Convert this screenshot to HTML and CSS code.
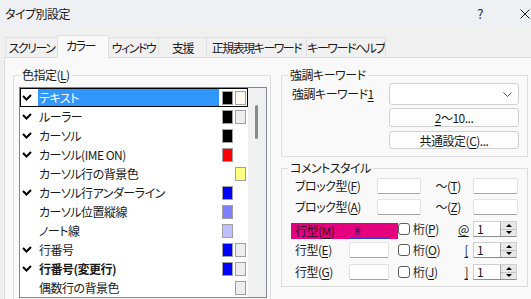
FILE: index.html
```html
<!DOCTYPE html>
<html lang="ja">
<head>
  <meta charset="UTF-8">
  <title>タイプ別設定</title>
  <link rel="stylesheet" href="styles.css">
</head>
<body>
  <div class="titlebar">
    <span class="title">タイプ別設定</span>
    <span class="help">?</span>
    <svg class="close" width="10" height="10" viewBox="0 0 10 10">
      <path d="M0.5 0.5L9.5 9.5M9.5 0.5L0.5 9.5" stroke="#1a1a1a" stroke-width="1" fill="none"/>
    </svg>
  </div>

  <div class="tabs">
    <div class="tab">スクリーン</div>
    <div class="tab active">カラー</div>
    <div class="tab">ウィンドウ</div>
    <div class="tab">支援</div>
    <div class="tab">正規表現キーワード</div>
    <div class="tab">キーワードヘルプ</div>
  </div>

  <div class="panel">
    <fieldset class="group colors">
      <legend>色指定(<u>L</u>)</legend>
      <div class="listbox">
        <div class="items">
          <div class="item sel">
            <span class="check"><svg width="10" height="8" viewBox="0 0 10 8"><path d="M1 2L4.5 5.5L9 1" /></svg></span>
            <span class="name">テキスト</span>
            <span class="sw black"></span><span class="sw cream"></span>
          </div>
          <div class="item">
            <span class="check"><svg width="10" height="8" viewBox="0 0 10 8"><path d="M1 2L4.5 5.5L9 1" /></svg></span>
            <span class="name">ルーラー</span>
            <span class="sw black"></span><span class="sw grey"></span>
          </div>
          <div class="item">
            <span class="check"><svg width="10" height="8" viewBox="0 0 10 8"><path d="M1 2L4.5 5.5L9 1" /></svg></span>
            <span class="name">カーソル</span>
            <span class="sw black"></span><span class="sw none"></span>
          </div>
          <div class="item">
            <span class="check"><svg width="10" height="8" viewBox="0 0 10 8"><path d="M1 2L4.5 5.5L9 1" /></svg></span>
            <span class="name">カーソル(IME ON)</span>
            <span class="sw red"></span><span class="sw none"></span>
          </div>
          <div class="item">
            <span class="check"></span>
            <span class="name">カーソル行の背景色</span>
            <span class="sw none"></span><span class="sw yellow"></span>
          </div>
          <div class="item">
            <span class="check"><svg width="10" height="8" viewBox="0 0 10 8"><path d="M1 2L4.5 5.5L9 1" /></svg></span>
            <span class="name">カーソル行アンダーライン</span>
            <span class="sw blue"></span><span class="sw none"></span>
          </div>
          <div class="item">
            <span class="check"></span>
            <span class="name">カーソル位置縦線</span>
            <span class="sw mid-blue"></span><span class="sw none"></span>
          </div>
          <div class="item">
            <span class="check"></span>
            <span class="name">ノート線</span>
            <span class="sw pale-blue"></span><span class="sw none"></span>
          </div>
          <div class="item">
            <span class="check"><svg width="10" height="8" viewBox="0 0 10 8"><path d="M1 2L4.5 5.5L9 1" /></svg></span>
            <span class="name">行番号</span>
            <span class="sw blue"></span><span class="sw grey"></span>
          </div>
          <div class="item">
            <span class="check"><svg width="10" height="8" viewBox="0 0 10 8"><path d="M1 2L4.5 5.5L9 1" /></svg></span>
            <span class="name bold">行番号(変更行)</span>
            <span class="sw blue"></span><span class="sw grey"></span>
          </div>
          <div class="item">
            <span class="check"></span>
            <span class="name">偶数行の背景色</span>
            <span class="sw none"></span><span class="sw grey"></span>
          </div>
        </div>
        <div class="scrollbar"><div class="thumb"></div></div>
      </div>
    </fieldset>

    <div class="right">
      <fieldset class="group keywords">
        <legend>強調キーワード</legend>
        <div class="kw-grid">
          <label>強調キーワード<u>1</u></label>
          <div class="combo">
            <svg width="9" height="5" viewBox="0 0 9 5"><path d="M0.5 0.5L4.5 4.5L8.5 0.5" fill="none" stroke="#555" stroke-width="1"/></svg>
          </div>
          <button class="btn btn-first"><u>2</u>〜10...</button>
          <button class="btn btn-second">共通設定(<u>C</u>)...</button>
        </div>
      </fieldset>

      <fieldset class="group comments">
        <legend>コメントスタイル</legend>
        <div class="line">
          <span class="lbl-block">ブロック型(<u>F</u>)</span>
          <span class="field"></span>
          <span class="lbl-to">〜(<u>T</u>)</span>
          <span class="field"></span>
        </div>
        <div class="line gap-5">
          <span class="lbl-block">ブロック型(<u>A</u>)</span>
          <span class="field"></span>
          <span class="lbl-to">〜(<u>Z</u>)</span>
          <span class="field"></span>
        </div>
        <div class="line gap-6">
          <span class="key hl">
            <span class="lbl-line">行型(<u>M</u>)</span>
            <span class="field small hash">#</span>
          </span>
          <span class="cb"></span>
          <span class="lbl-col">桁(<u>P</u>)</span>
          <span class="mark"><u>@</u></span>
          <span class="spin"><span class="val">1</span><span class="arrows"><span class="up"></span><span class="down"></span></span></span>
        </div>
        <div class="line gap-5">
          <span class="key">
            <span class="lbl-line">行型(<u>E</u>)</span>
            <span class="field small"></span>
          </span>
          <span class="cb"></span>
          <span class="lbl-col">桁(<u>O</u>)</span>
          <span class="mark"><u>[</u></span>
          <span class="spin"><span class="val">1</span><span class="arrows"><span class="up"></span><span class="down"></span></span></span>
        </div>
        <div class="line gap-6">
          <span class="key">
            <span class="lbl-line">行型(<u>G</u>)</span>
            <span class="field small"></span>
          </span>
          <span class="cb"></span>
          <span class="lbl-col">桁(<u>J</u>)</span>
          <span class="mark"><u>]</u></span>
          <span class="spin"><span class="val">1</span><span class="arrows"><span class="up"></span><span class="down"></span></span></span>
        </div>
      </fieldset>
    </div>
  </div>
</body>
</html>
```

FILE: styles.css
```css
:root {
  --text-color: #1a1a1a;
  --window-bg: #f0f0f0;
  --panel-bg: #f9f9f9;
  --title-bg: #eff0f4;
  --line-color: #dcdcdc;
  --select-blue: #3297fd;
  --accent: #e5007e;
}

* {
  margin: 0;
  padding: 0;
  box-sizing: border-box;
}

body {
  width: 531px;
  height: 299px;
  overflow: hidden;
  background: var(--window-bg);
  color: var(--text-color);
  font-family: "Noto Sans CJK JP", "Noto Sans", sans-serif;
  font-size: 12px;
  line-height: 16px;
  letter-spacing: -0.5px;
  font-feature-settings: "palt";
}

u {
  text-underline-offset: 2px;
}

/* title bar */
.titlebar {
  height: 27px;
  display: flex;
  align-items: center;
  padding: 0 1px 0 5px;
  background: var(--title-bg);
}

.title {
  flex: 1;
}

.help {
  margin-right: 37px;
  font-size: 13px;
}

/* tabs */
.tabs {
  height: 30px;
  display: flex;
  align-items: flex-end;
  padding-left: 5px;
}

.tab {
  height: 20px;
  line-height: 19px;
  text-align: center;
  letter-spacing: -1.5px;
  overflow: hidden;
  border: 1px solid #e0e0e0;
  border-right: none;
  border-bottom: none;
  white-space: nowrap;
}

.tab:nth-child(1) { width: 52px; }
.tab:nth-child(2) { width: 51px; }
.tab:nth-child(3) { width: 50px; }
.tab:nth-child(4) { width: 48px; }
.tab:nth-child(5) { width: 100px; }
.tab:nth-child(6) { width: 80px; border-right: 1px solid #e0e0e0; }

.tab.active {
  position: relative;
  z-index: 1;
  height: 23px;
  margin-bottom: -1px;
  padding: 0 0 0 8px;
  text-align: left;
  background: var(--panel-bg);
}

/* main panel */
.panel {
  height: 242px;
  margin-left: 4px;
  display: flex;
  overflow: hidden;
  padding: 9px 0 0 8px;
  background: var(--panel-bg);
  border-left: 1px solid var(--line-color);
  border-top: 1px solid var(--line-color);
}

.group {
  border: 1px solid var(--line-color);
  min-width: 0;
}

.group legend {
  padding: 0 2px;
  line-height: 16px;
}

/* colour list */
.colors {
  width: 258px;
  height: 236px;
  padding: 4px 0 0 5px;
}

.colors legend {
  margin-left: 1px;
}

.listbox {
  width: 248px;
  height: 211px;
  display: flex;
  background: #fff;
  border: 1px solid #828790;
}

.items {
  width: 228px;
}

.item {
  height: 19px;
  display: flex;
  align-items: center;
}

.item.sel {
  box-shadow: inset 0 0 0 1px #000;
}

.check {
  width: 18px;
  height: 17px;
  display: flex;
  align-items: center;
  padding-left: 2px;
}

.check path {
  fill: none;
  stroke: #000;
  stroke-width: 2;
}

.name {
  flex: 1;
  height: 17px;
  line-height: 17px;
  padding-left: 1px;
  white-space: nowrap;
  overflow: hidden;
}

.item.sel .name {
  background: var(--select-blue);
  color: #fff;
}

.name.bold {
  font-weight: 700;
}

.sw {
  width: 11px;
  height: 14px;
  margin-left: 3px;
  border: 1px solid #a0a0a0;
}

.sw + .sw {
  margin-left: 2px;
  margin-right: 2px;
}

.sw.none { visibility: hidden; }
.sw.black { background: #000; }
.sw.cream { background: #fffaf0; }
.sw.grey { background: #eeeeee; }
.sw.red { background: #ff0000; }
.sw.yellow { background: #ffff80; }
.sw.blue { background: #0000ff; }
.sw.mid-blue { background: #8080ff; }
.sw.pale-blue { background: #c0c0ff; }

.scrollbar {
  flex: 1;
  padding: 17px 0 0 7px;
  background: #f0f0f0;
}

.thumb {
  width: 3px;
  height: 34px;
  border-radius: 2px;
  background: #8a8a8a;
}

/* right column */
.right {
  width: 247px;
  margin-left: 10px;
  display: flex;
  flex-direction: column;
}

.keywords {
  padding: 0 9px 7px 10px;
}

.keywords legend {
  margin-left: -4px;
}

.kw-grid {
  display: grid;
  grid-template-columns: 97px 130px;
  align-items: center;
}

.combo {
  height: 22px;
  display: flex;
  align-items: center;
  justify-content: flex-end;
  padding-right: 6px;
  background: #fff;
  border: 1px solid #d2d2d2;
  border-radius: 3px;
}

.btn {
  grid-column: 2;
  font: inherit;
  letter-spacing: inherit;
  color: inherit;
  background: #fdfdfd;
  border: 1px solid #d0d0d0;
  border-radius: 3px;
  line-height: 15px;
}

.btn-first {
  height: 19px;
  margin-top: 3px;
}

.btn-second {
  height: 18px;
  margin-top: 4px;
}

/* comment style */
.comments {
  margin-top: 3px;
  padding: 2px 9px 6px 13px;
}

.comments legend {
  margin-left: -7px;
}

.line {
  height: 16px;
  display: flex;
  align-items: center;
  white-space: nowrap;
}

.gap-5 { margin-top: 5px; }
.gap-6 { margin-top: 6px; }

.lbl-block {
  width: 82px;
}

.lbl-to {
  width: 38px;
  margin-left: 14px;
}

.field {
  width: 45px;
  height: 16px;
  background: #fff;
  border: 1px solid #e2e2e2;
  border-bottom-color: #a3a3a3;
  border-radius: 2px;
}

.field.small {
  width: 40px;
}

.key {
  height: 16px;
  display: flex;
  align-items: center;
  margin-left: -4px;
  padding: 0 9px 0 4px;
}

.key.hl {
  margin-top: 3px;
  background: var(--accent);
}

.lbl-line {
  width: 54px;
}

.field.hash {
  background: transparent;
  border: none;
  border-bottom: 1px solid #2b3fd0;
  border-radius: 0;
  padding-left: 5px;
  line-height: 14px;
  color: #1c1c5a;
}

.cb {
  width: 12px;
  height: 12px;
  background: #fff;
  border: 1px solid #5c5c5c;
  border-radius: 3px;
}

.lbl-col {
  width: 48px;
  padding-left: 3px;
}

.mark {
  width: 10px;
  text-align: right;
}

.spin {
  width: 44px;
  height: 16px;
  margin-left: 5px;
  display: flex;
  background: #fff;
  border: 1px solid #cfcfcf;
  border-bottom-color: #8c8c8c;
}

.val {
  flex: 1;
  padding-left: 3px;
  line-height: 14px;
}

.arrows {
  width: 16px;
  display: flex;
  flex-direction: column;
  background: #e8e8e8;
  border-left: 1px solid #a8a8a8;
}

.up,
.down {
  flex: 1;
  display: flex;
  align-items: center;
  justify-content: center;
}

.up {
  border-bottom: 1px solid #c4c4c4;
}

.up::before,
.down::before {
  content: '';
  border-left: 3px solid transparent;
  border-right: 3px solid transparent;
}

.up::before {
  border-bottom: 3px solid #000;
}

.down::before {
  border-top: 3px solid #000;
}
```
